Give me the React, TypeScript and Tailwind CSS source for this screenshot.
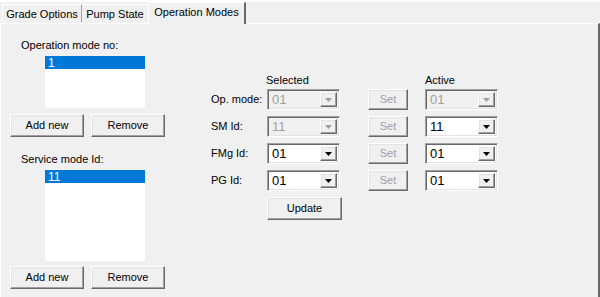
import React from "react";

const raised =
  "border border-t-white border-l-white border-b-[#696969] border-r-[#696969] shadow-[inset_-1px_-1px_0_#a0a0a0,inset_1px_1px_0_#e3e3e3]";
const sunken =
  "border border-t-[#a0a0a0] border-l-[#a0a0a0] border-b-white border-r-white shadow-[inset_1px_1px_0_#696969,inset_-1px_-1px_0_#e3e3e3]";

function Button({
  label,
  w = "w-[75px]",
  h = "h-[23px]",
  disabled = false,
}: {
  label: string;
  w?: string;
  h?: string;
  disabled?: boolean;
}) {
  return (
    <div
      className={`${raised} ${w} ${h} flex items-center justify-center bg-[#f0f0f0] text-[11px] leading-none ${
        disabled ? "text-[#a0a0a0]" : "text-black"
      }`}
    >
      {label}
    </div>
  );
}

function Combo({ value, disabled = false }: { value: string; disabled?: boolean }) {
  return (
    <div
      className={`${sunken} flex h-[21px] w-[73px] items-stretch p-[2px] ${
        disabled ? "bg-[#f0f0f0]" : "bg-white"
      }`}
    >
      <div
        className={`flex flex-1 items-center pl-[2px] text-[13px] leading-none ${
          disabled ? "text-[#a0a0a0]" : "text-black"
        }`}
      >
        {value}
      </div>
      <div
        className={`${raised} flex w-[17px] items-center justify-center bg-[#f0f0f0]`}
      >
        <svg width="7" height="4" viewBox="0 0 7 4">
          <polygon points="0,0 7,0 3.5,4" fill={disabled ? "#a0a0a0" : "#000"} />
        </svg>
      </div>
    </div>
  );
}

function ListBox({ item, h }: { item: string; h: string }) {
  return (
    <div className={`ml-[44px] w-[100px] bg-white ${h}`}>
      <div className="flex h-[13px] items-center bg-[#0078d7] pl-[3px] text-[12px] leading-none text-white">
        {item}
      </div>
    </div>
  );
}

const rows = [
  { label: "Op. mode:", sel: "01", selDis: true, act: "01", actDis: true },
  { label: "SM Id:", sel: "11", selDis: true, act: "11", actDis: false },
  { label: "FMg Id:", sel: "01", selDis: false, act: "01", actDis: false },
  { label: "PG Id:", sel: "01", selDis: false, act: "01", actDis: false },
];

export default function App() {
  return (
    <div
      className="flex h-[297px] w-[600px] flex-col overflow-hidden bg-[#f0f0f0] text-black"
      style={{ fontFamily: '"Liberation Sans", Arial, sans-serif' }}
    >
      {/* tab strip */}
      <div className="relative z-10 flex h-[23px] items-end border-t-2 border-white pl-[2px]">
        <div className="mb-[1px] flex h-[18px] w-[80px] items-center justify-center border-l border-t border-white border-r border-r-[#a0a0a0] pt-[1px] text-[11px] leading-none">
          Grade Options
        </div>
        <div className="mb-[1px] flex h-[18px] w-[66px] items-center justify-center border-t border-white pt-[1px] text-[11px] leading-none">
          Pump State
        </div>
        <div className="-mb-[1px] flex h-[22px] w-[98px] items-center justify-center border-l border-t border-white border-r-2 border-r-[#696969] bg-[#f0f0f0] pb-[2px] text-[11px] leading-none">
          Operation Modes
        </div>
      </div>

      {/* panel */}
      <div className="flex flex-1 border-l border-t border-white border-r-2 border-r-[#696969]">
        <div className="flex w-[210px] flex-col">
          <div className="ml-[20px] mt-[15px] text-[11px] leading-[13px]">Operation mode no:</div>
          <div className="mt-[4px]">
            <ListBox item="1" h="h-[52px]" />
          </div>
          <div className="ml-[9px] mt-[6px] flex gap-[7px]">
            <Button label="Add new" w="w-[74px]" />
            <Button label="Remove" w="w-[74px]" />
          </div>
          <div className="ml-[20px] mt-[16px] text-[11px] leading-[13px]">Service mode Id:</div>
          <div className="mt-[4px]">
            <ListBox item="11" h="h-[91px]" />
          </div>
          <div className="ml-[9px] mt-[5px] flex gap-[7px]">
            <Button label="Add new" w="w-[74px]" />
            <Button label="Remove" w="w-[74px]" />
          </div>
        </div>

        <div className="flex flex-col">
          <div className="mt-[50px] flex text-[11px] leading-[13px]">
            <div className="ml-[55px] w-[159px]">Selected</div>
            <div>Active</div>
          </div>
          <div className="mt-[2px] flex flex-col gap-[6px]">
            {rows.map((r) => (
              <div key={r.label} className="flex items-center">
                <div className="w-[56px] text-[11px] leading-none">{r.label}</div>
                <Combo value={r.sel} disabled={r.selDis} />
                <div className="ml-[28px]">
                  <Button label="Set" w="w-[40px]" h="h-[21px]" disabled />
                </div>
                <div className="ml-[17px]">
                  <Combo value={r.act} disabled={r.actDis} />
                </div>
              </div>
            ))}
          </div>
          <div className="ml-[56px] mt-[6px]">
            <Button label="Update" />
          </div>
        </div>
      </div>
    </div>
  );
}
